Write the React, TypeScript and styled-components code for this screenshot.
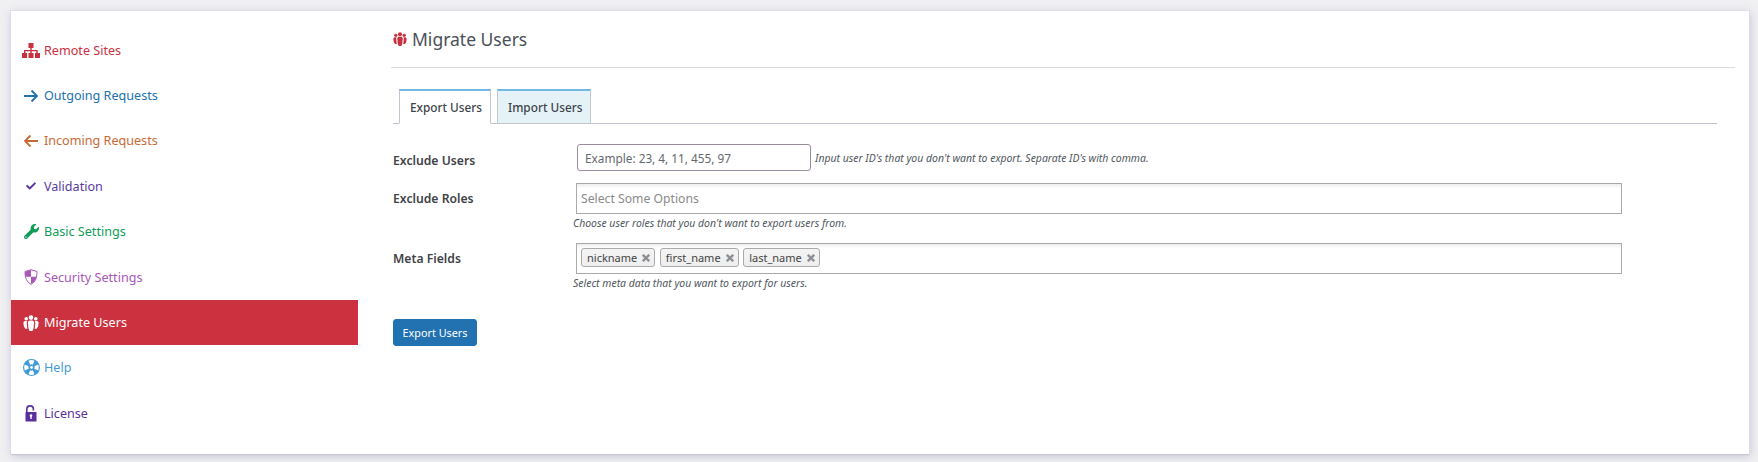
import styled, { createGlobalStyle } from "styled-components"
import { FaWrench, FaCheck } from "react-icons/fa"

const GlobalStyle = createGlobalStyle`
    html, body {
        margin: 0;
        background: #f0f0f3;
    }
    body {
        padding: 11px 9px 8px 11px;
        font-family: "Noto Sans", "Open Sans", sans-serif;
        font-size: 12.6px;
        color: #3c434a;
    }
`

const Card = styled.div`
    display: flex;
    height: 443px;
    background: #fff;
    box-shadow: 0 1px 1px #c9c9d6, 0 0 0 1px #e0e0e6, 1px 2px 9px rgba(110, 110, 150, 0.35);
`

const Sidebar = styled.nav`
    width: 347px;
    flex: none;
    padding-top: 16.5px;
`

const NavItem = styled.a<{ $color: string; $active?: boolean }>`
    display: flex;
    align-items: center;
    gap: 3px;
    height: 45.4px;
    padding-left: 10px;
    color: ${(p) => (p.$active ? "#fff" : p.$color)};
    background: ${(p) => (p.$active ? "#cc3140" : "transparent")};
`

const IconSlot = styled.span`
    display: flex;
    align-items: center;
    justify-content: center;
    width: 20px;
    height: 20px;
`

const Main = styled.main`
    flex: 1;
    padding: 0 14px 0 33px;
`

const TitleBar = styled.header`
    display: flex;
    align-items: center;
    gap: 5px;
    height: 57px;
    padding-left: 2px;
    box-sizing: border-box;
    border-bottom: 1px solid #dcdcde;
    color: #c9313f;
`

const Title = styled.h1`
    margin: 0;
    font-size: 17.5px;
    font-weight: 400;
    color: #4a5056;
`

const Tabs = styled.div`
    display: flex;
    gap: 6px;
    height: 35px;
    box-sizing: border-box;
    margin: 21px 18px 0 2px;
    padding-left: 6px;
    border-bottom: 1px solid #c3c4d0;
`

const Tab = styled.div<{ $active?: boolean }>`
    display: flex;
    align-items: center;
    padding: 0 8px 0 10px;
    height: 35px;
    box-sizing: border-box;
    font-size: 11.8px;
    font-weight: 500;
    border: 1px solid #c3c4d0;
    border-top: 2px solid #72b9e4;
    border-bottom-color: ${(p) => (p.$active ? "#fff" : "#c3c4d0")};
    background: ${(p) => (p.$active ? "#fff" : "#e5f3f8")};
`

const Row = styled.div<{ $top: number }>`
    display: grid;
    grid-template-columns: 180px 1fr;
    margin: ${(p) => p.$top}px 0 0 2px;
`

const Label = styled.label<{ $offset: number }>`
    font-size: 12.2px;
    font-weight: 600;
    color: #3f4347;
    padding-top: ${(p) => p.$offset}px;
`

const InputLine = styled.div`
    display: flex;
    align-items: center;
    gap: 4px;
    padding-left: 4px;
`

const TextInput = styled.div`
    width: 234px;
    height: 27px;
    box-sizing: border-box;
    display: flex;
    align-items: center;
    padding: 0 7px;
    border: 1px solid #9b8ba0;
    border-radius: 3px;
    font-size: 11.8px;
    color: #646970;
`

const Hint = styled.span`
    font-size: 10.45px;
    font-style: italic;
    color: #50575e;
`

const HintBlock = styled(Hint)`
    display: block;
    margin-top: 1px;
    line-height: 17px;
`

const MultiSelect = styled.div<{ $hasChips?: boolean }>`
    width: 1046px;
    height: 31px;
    box-sizing: border-box;
    margin-left: 3px;
    display: flex;
    align-items: center;
    gap: 4.6px;
    padding: 0 4px ${(p) => (p.$hasChips ? "2px" : "0")};
    border: 1px solid #aaa;
    background: linear-gradient(#eee 1%, #fff 15%);
    font-size: 12.2px;
    color: #8a8a8a;
`

const Chip = styled.span`
    display: flex;
    align-items: center;
    gap: 5px;
    height: 19px;
    box-sizing: border-box;
    padding: 0 4px 0 5px;
    border: 1px solid #aaa;
    border-radius: 3px;
    background: linear-gradient(#f4f4f4, #eee);
    font-size: 11px;
    color: #444;
`

const ChipClose = styled.svg`
    width: 8px;
    height: 8px;
    stroke: #8f8f96;
    stroke-width: 3;
`

const ExportButton = styled.button`
    display: block;
    width: 84px;
    height: 27px;
    margin: 27px 0 0 2px;
    padding: 0;
    border: 1px solid #2271b1;
    border-radius: 3px;
    background: #2271b1;
    color: #fff;
    font: 10.8px "Noto Sans", sans-serif;
`

function SitemapIcon() {
    return (
        <svg width="18" height="15" viewBox="0 0 18 15" fill="currentColor">
            <path d="M6.500 0h5v5h-5zM8.300 5h1.400v2h6v3h-1.400V8.300H9.700V10H8.300V8.300H3.400V10H2V7h6.300z" />
            <path d="M0 10h5v5H0zM6.500 10h5v5h-5zM13 10h5v5h-5z" />
        </svg>
    )
}

function ArrowIcon({ left }: { left?: boolean }) {
    return (
        <svg width="16" height="16" viewBox="0 0 16 16" fill="none" stroke="currentColor" strokeWidth="1.8" style={left ? { transform: "scaleX(-1)" } : undefined}>
            <path d="M1 8h13M8.500 2.500 14 8l-5.500 5.500" />
        </svg>
    )
}

function GroupIcon({ size = 16 }: { size?: number }) {
    return (
        <svg width={size} height={size} viewBox="0 0 16 16" fill="currentColor">
            <circle cx="8" cy="2.600" r="2.300" />
            <circle cx="3.200" cy="3.800" r="1.800" />
            <circle cx="12.800" cy="3.800" r="1.800" />
            <path d="M4.900 7.500C4.900 5.800 6.200 5.400 8 5.400s3.100.4 3.100 2.100l-.5 5.500L9.500 16h-3l-1.100-3z" />
            <path d="M.4 7.700C.4 6.300 1.700 5.900 3.200 5.900c.4 0 .7 0 1 .1-.3.4-.5 1-.5 1.700l.5 5.300.3.8H2.200L.8 11z" />
            <path d="M15.600 7.700c0-1.400-1.300-1.800-2.800-1.800-.4 0-.7 0-1 .1.300.4.500 1 .5 1.700l-.5 5.300-.3.800h2.300L15.200 11z" />
        </svg>
    )
}

function ShieldIcon() {
    return (
        <svg width="14" height="16" viewBox="0 0 14 16">
            <path fill="#fff" stroke="currentColor" strokeWidth="1" d="M7 .7 1 2.500C1 9 2.500 12.800 7 15.300c4.500-2.500 6-6.300 6-12.800z" />
            <path fill="currentColor" d="M7 1v6.800H1.500C1.200 6.300 1.100 4.500 1.100 2.800zM7 7.800h5.500C12 10.800 10.300 13 7 15z" />
        </svg>
    )
}

function SosIcon() {
    return (
        <svg width="17" height="17" viewBox="2 2 16 16">
            <circle cx="10" cy="10" r="8" fill="currentColor" />
            <path
                fill="#fff"
                d="M7.230 3.570 8.720 7.300a3 3 0 0 1 2.560 0l1.490-3.730a7 7 0 0 0-5.540 0zM7.230 16.430 8.720 12.700a3 3 0 0 0 2.560 0l1.490 3.730a7 7 0 0 1-5.540 0zM3.570 7.230 7.300 8.720a3 3 0 0 0 0 2.560l-3.730 1.490a7 7 0 0 1 0-5.540zM16.430 7.230 12.700 8.720a3 3 0 0 1 0 2.560l3.730 1.490a7 7 0 0 0 0-5.540z"
            />
            <circle cx="10" cy="10" r="1.300" fill="#fff" />
        </svg>
    )
}

function LockIcon() {
    return (
        <svg width="14" height="17" viewBox="0 0 14 17">
            <path fill="none" stroke="currentColor" strokeWidth="1.600" d="M2.800 7V4.200a3.300 3.300 0 0 1 6.600 0v1.300" />
            <path fill="currentColor" fillRule="evenodd" d="M1.500 7h11v9.500h-11zM7 9.300a1.300 1.300 0 0 0-.7 2.400V14h1.400v-2.300A1.300 1.300 0 0 0 7 9.300z" />
        </svg>
    )
}

const navItems = [
    { label: "Remote Sites", color: "#c9313f", icon: <SitemapIcon /> },
    { label: "Outgoing Requests", color: "#2271b1", icon: <ArrowIcon /> },
    { label: "Incoming Requests", color: "#c86a35", icon: <ArrowIcon left /> },
    { label: "Validation", color: "#5b3a9e", icon: <FaCheck size={10} /> },
    { label: "Basic Settings", color: "#0f9d58", icon: <FaWrench size={15} /> },
    { label: "Security Settings", color: "#a956b8", icon: <ShieldIcon /> },
    { label: "Migrate Users", color: "#fff", icon: <GroupIcon />, active: true },
    { label: "Help", color: "#3f9ad9", icon: <SosIcon /> },
    { label: "License", color: "#5b2f9e", icon: <LockIcon /> },
]

export default function App() {
    return (
        <>
            <GlobalStyle />
            <Card>
                <Sidebar>
                    {navItems.map((item) => (
                        <NavItem key={item.label} $color={item.color} $active={item.active}>
                            <IconSlot>{item.icon}</IconSlot>
                            {item.label}
                        </NavItem>
                    ))}
                </Sidebar>
                <Main>
                    <TitleBar>
                        <GroupIcon size={14} />
                        <Title>Migrate Users</Title>
                    </TitleBar>
                    <Tabs>
                        <Tab $active>Export Users</Tab>
                        <Tab>Import Users</Tab>
                    </Tabs>
                    <Row $top={20}>
                        <Label $offset={8}>Exclude Users</Label>
                        <InputLine>
                            <TextInput>Example: 23, 4, 11, 455, 97</TextInput>
                            <Hint>Input user ID's that you don't want to export. Separate ID's with comma.</Hint>
                        </InputLine>
                    </Row>
                    <Row $top={12}>
                        <Label $offset={7}>Exclude Roles</Label>
                        <div>
                            <MultiSelect>Select Some Options</MultiSelect>
                            <HintBlock>Choose user roles that you don't want to export users from.</HintBlock>
                        </div>
                    </Row>
                    <Row $top={11}>
                        <Label $offset={7}>Meta Fields</Label>
                        <div>
                            <MultiSelect $hasChips>
                                {["nickname", "first_name", "last_name"].map((name) => (
                                    <Chip key={name}>
                                        {name}
                                        <ChipClose viewBox="0 0 10 10"><path d="M1 1l8 8M9 1l-8 8" /></ChipClose>
                                    </Chip>
                                ))}
                            </MultiSelect>
                            <HintBlock>Select meta data that you want to export for users.</HintBlock>
                        </div>
                    </Row>
                    <ExportButton>Export Users</ExportButton>
                </Main>
            </Card>
        </>
    )
}
